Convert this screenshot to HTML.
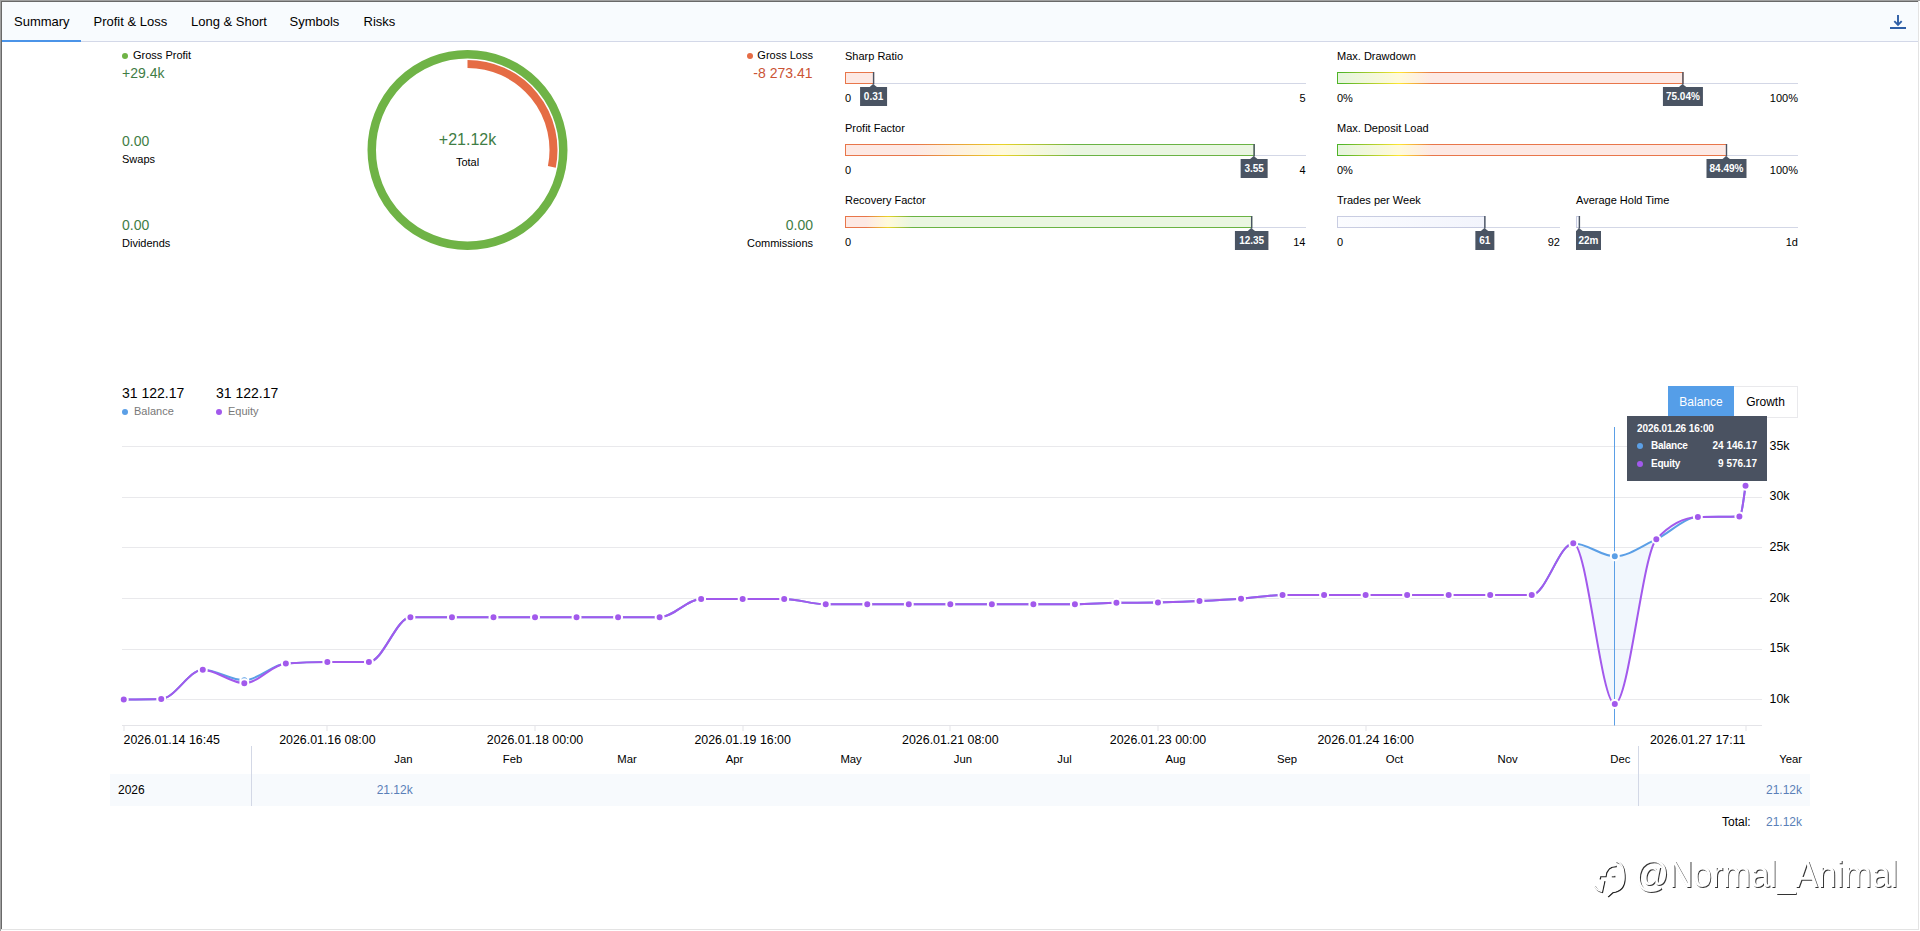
<!DOCTYPE html>
<html lang="en"><head><meta charset="utf-8"><title>Summary</title>
<style>
html,body{margin:0;padding:0;}
body{width:1920px;height:931px;position:relative;overflow:hidden;background:#fff;font-family:"Liberation Sans", sans-serif;}
.t{position:absolute;white-space:nowrap;line-height:20px;height:20px;}
.b{position:absolute;display:block;}
.dot{position:absolute;width:6px;height:6px;border-radius:50%;}
.wm{font-size:37px;line-height:44px;height:44px;color:#fff;text-shadow:1px 1px 0 rgba(0,0,0,.8);transform-origin:0 50%;transform:scaleX(.905);letter-spacing:0;}
</style></head><body>
<div class="b" style="left:0px;top:0px;width:1920px;height:1px;background:#a0a0a0;"></div>
<div class="b" style="left:0px;top:1px;width:1919px;height:1px;background:#696969;"></div>
<div class="b" style="left:0px;top:0px;width:1px;height:931px;background:#a0a0a0;"></div>
<div class="b" style="left:1px;top:1px;width:1px;height:929px;background:#696969;"></div>
<div class="b" style="left:1918px;top:1px;width:1px;height:929px;background:#e3e3e3;"></div>
<div class="b" style="left:1px;top:929px;width:1918px;height:1px;background:#e3e3e3;"></div>
<div class="b" style="left:2px;top:2px;width:1916px;height:39px;background:#f8fbfe;"></div>
<div class="b" style="left:2px;top:41px;width:1916px;height:1px;background:#d3d8e8;"></div>
<div class="b" style="left:2px;top:40px;width:79px;height:2px;background:#4b94e8;"></div>
<div class="t" style="top:11.50px;font-size:13px;color:#000;left:14.00px;">Summary</div>
<div class="t" style="top:11.50px;font-size:13px;color:#000;left:93.50px;">Profit &amp; Loss</div>
<div class="t" style="top:11.50px;font-size:13px;color:#000;left:191.00px;">Long &amp; Short</div>
<div class="t" style="top:11.50px;font-size:13px;color:#000;left:289.50px;">Symbols</div>
<div class="t" style="top:11.50px;font-size:13px;color:#000;left:363.50px;">Risks</div>
<svg class="b" style="left:1886px;top:12px" width="24" height="20" viewBox="0 0 24 20"><path d="M12 3v9.2M8.3 9.2L12 12.9l3.7-3.7" fill="none" stroke="#2e5ea6" stroke-width="1.9"/><rect x="4" y="15" width="16" height="2" fill="#2e5ea6"/></svg>
<div class="dot" style="left:122px;top:53px;background:#6fb346"></div>
<div class="t" style="top:44.50px;font-size:11px;color:#000;left:133.00px;">Gross Profit</div>
<div class="t" style="top:62.50px;font-size:14px;color:#3f7d45;left:122.00px;">+29.4k</div>
<div class="t" style="top:130.50px;font-size:14px;color:#3f7d45;left:122.00px;">0.00</div>
<div class="t" style="top:148.50px;font-size:11px;color:#000;left:122.00px;">Swaps</div>
<div class="t" style="top:214.50px;font-size:14px;color:#3f7d45;left:122.00px;">0.00</div>
<div class="t" style="top:232.50px;font-size:11px;color:#000;left:122.00px;">Dividends</div>
<div class="dot" style="left:747px;top:53px;background:#e56c45"></div>
<div class="t" style="top:44.50px;font-size:11px;color:#000;right:1107.00px;">Gross Loss</div>
<div class="t" style="top:62.50px;font-size:14px;color:#cb5435;right:1107.50px;">-8 273.41</div>
<div class="t" style="top:214.50px;font-size:14px;color:#3f7d45;right:1107.00px;">0.00</div>
<div class="t" style="top:232.50px;font-size:11px;color:#000;right:1107.00px;">Commissions</div>
<svg class="b" style="left:0;top:0" width="1920" height="300" viewBox="0 0 1920 300"><circle cx="467.5" cy="150" r="95.75" fill="none" stroke="#6fb346" stroke-width="8.5"/><path d="M467.5 64A86 86 0 0 1 551.83 166.88" fill="none" stroke="#e56c45" stroke-width="8"/></svg>
<div class="t" style="top:129.50px;font-size:16px;color:#3f7d45;left:317.50px;width:300px;text-align:center;">+21.12k</div>
<div class="t" style="top:151.50px;font-size:11px;color:#000;left:317.50px;width:300px;text-align:center;">Total</div>
<svg class="b" style="left:0;top:0" width="1920" height="300" viewBox="0 0 1920 300"><defs><linearGradient id="g1" gradientUnits="userSpaceOnUse" x1="845" y1="0" x2="1306" y2="0"><stop offset="0.0000" stop-color="#e8764a"/><stop offset="0.1692" stop-color="#e8764a"/><stop offset="0.3427" stop-color="#ead428"/><stop offset="0.4816" stop-color="#6ab344"/><stop offset="1.0000" stop-color="#6ab344"/></linearGradient><linearGradient id="g2" gradientUnits="userSpaceOnUse" x1="845" y1="0" x2="1306" y2="0"><stop offset="0.0000" stop-color="#fde9e4"/><stop offset="0.1692" stop-color="#fde9e4"/><stop offset="0.3427" stop-color="#fffadb"/><stop offset="0.4816" stop-color="#eaf6e1"/><stop offset="1.0000" stop-color="#eaf6e1"/></linearGradient><linearGradient id="g3" gradientUnits="userSpaceOnUse" x1="845" y1="0" x2="1306" y2="0"><stop offset="0.0000" stop-color="#e8764a"/><stop offset="0.1518" stop-color="#e8764a"/><stop offset="0.3427" stop-color="#ead428"/><stop offset="0.4989" stop-color="#6ab344"/><stop offset="1.0000" stop-color="#6ab344"/></linearGradient><linearGradient id="g4" gradientUnits="userSpaceOnUse" x1="845" y1="0" x2="1306" y2="0"><stop offset="0.0000" stop-color="#fde9e4"/><stop offset="0.1518" stop-color="#fde9e4"/><stop offset="0.3427" stop-color="#fffadb"/><stop offset="0.4989" stop-color="#eaf6e1"/><stop offset="1.0000" stop-color="#eaf6e1"/></linearGradient><linearGradient id="g5" gradientUnits="userSpaceOnUse" x1="845" y1="0" x2="1306" y2="0"><stop offset="0.0000" stop-color="#e8764a"/><stop offset="0.0456" stop-color="#e8764a"/><stop offset="0.0933" stop-color="#ead428"/><stop offset="0.1453" stop-color="#6ab344"/><stop offset="1.0000" stop-color="#6ab344"/></linearGradient><linearGradient id="g6" gradientUnits="userSpaceOnUse" x1="845" y1="0" x2="1306" y2="0"><stop offset="0.0000" stop-color="#fde9e4"/><stop offset="0.0456" stop-color="#fde9e4"/><stop offset="0.0933" stop-color="#fffadb"/><stop offset="0.1453" stop-color="#eaf6e1"/><stop offset="1.0000" stop-color="#eaf6e1"/></linearGradient><linearGradient id="g7" gradientUnits="userSpaceOnUse" x1="1337" y1="0" x2="1798" y2="0"><stop offset="0.0000" stop-color="#4fb428"/><stop offset="0.0087" stop-color="#4fb428"/><stop offset="0.1345" stop-color="#ffe631"/><stop offset="0.2061" stop-color="#e8764a"/><stop offset="1.0000" stop-color="#e8764a"/></linearGradient><linearGradient id="g8" gradientUnits="userSpaceOnUse" x1="1337" y1="0" x2="1798" y2="0"><stop offset="0.0000" stop-color="#e6f5dc"/><stop offset="0.0087" stop-color="#e6f5dc"/><stop offset="0.1345" stop-color="#fffadb"/><stop offset="0.2061" stop-color="#fde9e4"/><stop offset="1.0000" stop-color="#fde9e4"/></linearGradient><linearGradient id="g9" gradientUnits="userSpaceOnUse" x1="1337" y1="0" x2="1798" y2="0"><stop offset="0.0000" stop-color="#4fb428"/><stop offset="0.0087" stop-color="#4fb428"/><stop offset="0.1345" stop-color="#ffe631"/><stop offset="0.2061" stop-color="#e8764a"/><stop offset="1.0000" stop-color="#e8764a"/></linearGradient><linearGradient id="g10" gradientUnits="userSpaceOnUse" x1="1337" y1="0" x2="1798" y2="0"><stop offset="0.0000" stop-color="#e6f5dc"/><stop offset="0.0087" stop-color="#e6f5dc"/><stop offset="0.1345" stop-color="#fffadb"/><stop offset="0.2061" stop-color="#fde9e4"/><stop offset="1.0000" stop-color="#fde9e4"/></linearGradient><linearGradient id="g11" gradientUnits="userSpaceOnUse" x1="1337" y1="0" x2="1560" y2="0"><stop offset="0.0000" stop-color="#c9cde2"/><stop offset="1.0000" stop-color="#c3c8de"/></linearGradient><linearGradient id="g12" gradientUnits="userSpaceOnUse" x1="1337" y1="0" x2="1484.858695652174" y2="0"><stop offset="0.0000" stop-color="#fbfcff"/><stop offset="1.0000" stop-color="#f2f4fc"/></linearGradient><linearGradient id="g13" gradientUnits="userSpaceOnUse" x1="1576" y1="0" x2="1798" y2="0"><stop offset="0.0000" stop-color="#c9cde2"/><stop offset="1.0000" stop-color="#c3c8de"/></linearGradient><linearGradient id="g14" gradientUnits="userSpaceOnUse" x1="1576" y1="0" x2="1579.3916666666667" y2="0"><stop offset="0.0000" stop-color="#fbfcff"/><stop offset="1.0000" stop-color="#f2f4fc"/></linearGradient></defs><rect x="845" y="83" width="461" height="1" fill="#d3d7e6"/><rect x="845" y="72" width="29.08" height="12" fill="url(#g1)"/><rect x="846" y="73" width="27.08" height="10" fill="url(#g2)"/><rect x="872.88" y="72" width="1.4" height="12.5" fill="#4a5463"/><rect x="860.08" y="87" width="27" height="19" fill="#4a5463"/><path d="M869.38 87.3L873.08 84L877.28 87.3z" fill="#4a5463"/><rect x="845" y="155" width="461" height="1" fill="#d3d7e6"/><rect x="845" y="144" width="409.64" height="12" fill="url(#g3)"/><rect x="846" y="145" width="407.64" height="10" fill="url(#g4)"/><rect x="1253.44" y="144" width="1.4" height="12.5" fill="#4a5463"/><rect x="1240.64" y="159" width="27" height="19" fill="#4a5463"/><path d="M1249.94 159.3L1253.64 156L1257.84 159.3z" fill="#4a5463"/><rect x="845" y="227" width="461" height="1" fill="#d3d7e6"/><rect x="845" y="216" width="407.17" height="12" fill="url(#g5)"/><rect x="846" y="217" width="405.17" height="10" fill="url(#g6)"/><rect x="1250.97" y="216" width="1.4" height="12.5" fill="#4a5463"/><rect x="1234.92" y="231" width="33.5" height="19" fill="#4a5463"/><path d="M1247.47 231.3L1251.17 228L1255.37 231.3z" fill="#4a5463"/><rect x="1337" y="83" width="461" height="1" fill="#d3d7e6"/><rect x="1337" y="72" width="346.43" height="12" fill="url(#g7)"/><rect x="1338" y="73" width="344.43" height="10" fill="url(#g8)"/><rect x="1682.23" y="72" width="1.4" height="12.5" fill="#4a5463"/><rect x="1662.93" y="87" width="40" height="19" fill="#4a5463"/><path d="M1678.73 87.3L1682.43 84L1686.63 87.3z" fill="#4a5463"/><rect x="1337" y="155" width="461" height="1" fill="#d3d7e6"/><rect x="1337" y="144" width="390.00" height="12" fill="url(#g9)"/><rect x="1338" y="145" width="388.00" height="10" fill="url(#g10)"/><rect x="1725.80" y="144" width="1.4" height="12.5" fill="#4a5463"/><rect x="1706.50" y="159" width="40" height="19" fill="#4a5463"/><path d="M1722.30 159.3L1726.00 156L1730.20 159.3z" fill="#4a5463"/><rect x="1337" y="227" width="223" height="1" fill="#d3d7e6"/><rect x="1337" y="216" width="148.36" height="12" fill="url(#g11)"/><rect x="1338" y="217" width="146.36" height="10" fill="url(#g12)"/><rect x="1484.16" y="216" width="1.4" height="12.5" fill="#4a5463"/><rect x="1475.36" y="231" width="19" height="19" fill="#4a5463"/><path d="M1480.66 231.3L1484.36 228L1488.56 231.3z" fill="#4a5463"/><rect x="1576" y="227" width="222" height="1" fill="#d3d7e6"/><rect x="1576" y="216" width="3.89" height="12" fill="url(#g13)"/><rect x="1577" y="217" width="1.89" height="10" fill="url(#g14)"/><rect x="1578.69" y="216" width="1.4" height="12.5" fill="#4a5463"/><rect x="1576.00" y="231" width="25" height="19" fill="#4a5463"/><path d="M1576.00 231.3L1578.89 228L1583.09 231.3z" fill="#4a5463"/></svg>
<div class="t" style="top:45.50px;font-size:11px;color:#000;left:845.00px;">Sharp Ratio</div>
<div class="t" style="top:87.10px;font-size:10px;color:#fff;font-weight:bold;left:723.58px;width:300px;text-align:center;">0.31</div>
<div class="t" style="top:88.00px;font-size:11px;color:#000;left:845.00px;">0</div>
<div class="t" style="top:88.00px;font-size:11px;color:#000;right:614.30px;">5</div>
<div class="t" style="top:117.50px;font-size:11px;color:#000;left:845.00px;">Profit Factor</div>
<div class="t" style="top:159.10px;font-size:10px;color:#fff;font-weight:bold;left:1104.14px;width:300px;text-align:center;">3.55</div>
<div class="t" style="top:160.00px;font-size:11px;color:#000;left:845.00px;">0</div>
<div class="t" style="top:160.00px;font-size:11px;color:#000;right:614.50px;">4</div>
<div class="t" style="top:189.50px;font-size:11px;color:#000;left:845.00px;">Recovery Factor</div>
<div class="t" style="top:231.10px;font-size:10px;color:#fff;font-weight:bold;left:1101.67px;width:300px;text-align:center;">12.35</div>
<div class="t" style="top:232.00px;font-size:11px;color:#000;left:845.00px;">0</div>
<div class="t" style="top:232.00px;font-size:11px;color:#000;right:614.50px;">14</div>
<div class="t" style="top:45.50px;font-size:11px;color:#000;left:1337.00px;">Max. Drawdown</div>
<div class="t" style="top:87.10px;font-size:10px;color:#fff;font-weight:bold;left:1532.93px;width:300px;text-align:center;">75.04%</div>
<div class="t" style="top:88.00px;font-size:11px;color:#000;left:1337.00px;">0%</div>
<div class="t" style="top:88.00px;font-size:11px;color:#000;right:122.00px;">100%</div>
<div class="t" style="top:117.50px;font-size:11px;color:#000;left:1337.00px;">Max. Deposit Load</div>
<div class="t" style="top:159.10px;font-size:10px;color:#fff;font-weight:bold;left:1576.50px;width:300px;text-align:center;">84.49%</div>
<div class="t" style="top:160.00px;font-size:11px;color:#000;left:1337.00px;">0%</div>
<div class="t" style="top:160.00px;font-size:11px;color:#000;right:122.00px;">100%</div>
<div class="t" style="top:189.50px;font-size:11px;color:#000;left:1337.00px;">Trades per Week</div>
<div class="t" style="top:231.10px;font-size:10px;color:#fff;font-weight:bold;left:1334.86px;width:300px;text-align:center;">61</div>
<div class="t" style="top:232.00px;font-size:11px;color:#000;left:1337.00px;">0</div>
<div class="t" style="top:232.00px;font-size:11px;color:#000;right:360.00px;">92</div>
<div class="t" style="top:189.50px;font-size:11px;color:#000;left:1576.00px;">Average Hold Time</div>
<div class="t" style="top:231.10px;font-size:10px;color:#fff;font-weight:bold;left:1438.50px;width:300px;text-align:center;">22m</div>
<div class="t" style="top:232.00px;font-size:11px;color:#000;right:122.00px;">1d</div>
<div class="t" style="top:382.50px;font-size:14px;color:#000;left:122.00px;">31 122.17</div>
<div class="dot" style="left:122px;top:409px;background:#5b9fe6"></div>
<div class="t" style="top:400.50px;font-size:11px;color:#787878;left:134.00px;">Balance</div>
<div class="t" style="top:382.50px;font-size:14px;color:#000;left:216.00px;">31 122.17</div>
<div class="dot" style="left:216px;top:409px;background:#a259ec"></div>
<div class="t" style="top:400.50px;font-size:11px;color:#787878;left:228.00px;">Equity</div>
<div class="b" style="left:1668px;top:386px;width:130px;height:32px;background:#fff;box-sizing:border-box;border:1px solid #e9e9ec;"></div>
<div class="b" style="left:1668px;top:386px;width:66px;height:32px;background:#559ee8;"></div>
<div class="t" style="top:391.50px;font-size:12px;color:#fff;left:1551.00px;width:300px;text-align:center;">Balance</div>
<div class="t" style="top:391.50px;font-size:12px;color:#000;left:1615.50px;width:300px;text-align:center;">Growth</div>
<svg class="b" style="left:0;top:420px" width="1920" height="320" viewBox="0 420 1920 320"><rect x="122" y="446" width="1640" height="1" fill="#e9e9ec"/><rect x="122" y="497" width="1640" height="1" fill="#e9e9ec"/><rect x="122" y="547" width="1640" height="1" fill="#e9e9ec"/><rect x="122" y="598" width="1640" height="1" fill="#e9e9ec"/><rect x="122" y="649" width="1640" height="1" fill="#e9e9ec"/><rect x="122" y="699" width="1640" height="1" fill="#e9e9ec"/><rect x="122" y="725" width="1640" height="1" fill="#e4e4e8"/><rect x="123.5" y="726" width="1" height="5" fill="#e4e4e8"/><rect x="326.5" y="726" width="1" height="5" fill="#e4e4e8"/><rect x="534.5" y="726" width="1" height="5" fill="#e4e4e8"/><rect x="742.5" y="726" width="1" height="5" fill="#e4e4e8"/><rect x="949.5" y="726" width="1" height="5" fill="#e4e4e8"/><rect x="1157.5" y="726" width="1" height="5" fill="#e4e4e8"/><rect x="1365.5" y="726" width="1" height="5" fill="#e4e4e8"/><rect x="1745.5" y="726" width="1" height="5" fill="#e4e4e8"/><path d="M123.75 699.60C136.25 699.50 148.75 699.40 161.25 699.00C175.09 698.56 188.94 669.75 202.78 669.75C216.62 669.75 230.47 680.25 244.31 680.25C258.15 680.25 272.00 664.50 285.84 663.50C299.68 662.50 313.53 662.00 327.37 662.00C341.21 662.00 355.06 662.00 368.90 662.00C382.74 662.00 396.59 617.25 410.43 617.25C424.27 617.25 438.12 617.25 451.96 617.25C465.80 617.25 479.65 617.25 493.49 617.25C507.33 617.25 521.18 617.25 535.02 617.25C548.86 617.25 562.71 617.25 576.55 617.25C590.39 617.25 604.24 617.25 618.08 617.25C631.92 617.25 645.77 617.25 659.61 617.25C673.45 617.25 687.30 599.00 701.14 599.00C714.98 599.00 728.83 599.00 742.67 599.00C756.51 599.00 770.36 599.00 784.20 599.00C798.04 599.00 811.89 604.25 825.73 604.25C839.57 604.25 853.42 604.25 867.26 604.25C881.10 604.25 894.95 604.25 908.79 604.25C922.63 604.25 936.48 604.25 950.32 604.25C964.16 604.25 978.01 604.25 991.85 604.25C1005.69 604.25 1019.54 604.25 1033.38 604.25C1047.22 604.25 1061.07 604.25 1074.91 604.25C1088.75 604.25 1102.60 602.92 1116.44 602.75C1130.28 602.58 1144.13 602.67 1157.97 602.50C1171.81 602.33 1185.66 601.62 1199.50 601.00C1213.34 600.38 1227.19 599.75 1241.03 598.75C1254.87 597.75 1268.72 595.00 1282.56 595.00C1296.40 595.00 1310.25 595.00 1324.09 595.00C1337.93 595.00 1351.78 595.00 1365.62 595.00C1379.46 595.00 1393.31 595.00 1407.15 595.00C1420.99 595.00 1434.84 595.00 1448.68 595.00C1462.52 595.00 1476.37 595.00 1490.21 595.00C1504.05 595.00 1517.90 595.00 1531.74 595.00C1545.58 595.00 1559.43 543.20 1573.27 543.20C1587.11 543.20 1600.96 556.30 1614.80 556.30C1628.64 556.30 1642.49 545.75 1656.33 539.20C1670.17 532.65 1684.02 517.40 1697.86 517.00C1711.70 516.60 1725.55 516.80 1739.39 516.40C1741.44 516.34 1743.49 501.02 1745.53 485.70L1745.53 485.70C1743.49 501.02 1741.44 516.34 1739.39 516.40C1725.55 516.80 1711.70 516.60 1697.86 517.00C1684.02 517.40 1670.17 524.40 1656.33 539.20C1642.49 554.00 1628.64 704.00 1614.80 704.00C1600.96 704.00 1587.11 543.20 1573.27 543.20C1559.43 543.20 1545.58 595.00 1531.74 595.00C1517.90 595.00 1504.05 595.00 1490.21 595.00C1476.37 595.00 1462.52 595.00 1448.68 595.00C1434.84 595.00 1420.99 595.00 1407.15 595.00C1393.31 595.00 1379.46 595.00 1365.62 595.00C1351.78 595.00 1337.93 595.00 1324.09 595.00C1310.25 595.00 1296.40 595.00 1282.56 595.00C1268.72 595.00 1254.87 597.75 1241.03 598.75C1227.19 599.75 1213.34 600.38 1199.50 601.00C1185.66 601.62 1171.81 602.33 1157.97 602.50C1144.13 602.67 1130.28 602.58 1116.44 602.75C1102.60 602.92 1088.75 604.25 1074.91 604.25C1061.07 604.25 1047.22 604.25 1033.38 604.25C1019.54 604.25 1005.69 604.25 991.85 604.25C978.01 604.25 964.16 604.25 950.32 604.25C936.48 604.25 922.63 604.25 908.79 604.25C894.95 604.25 881.10 604.25 867.26 604.25C853.42 604.25 839.57 604.25 825.73 604.25C811.89 604.25 798.04 599.00 784.20 599.00C770.36 599.00 756.51 599.00 742.67 599.00C728.83 599.00 714.98 599.00 701.14 599.00C687.30 599.00 673.45 617.25 659.61 617.25C645.77 617.25 631.92 617.25 618.08 617.25C604.24 617.25 590.39 617.25 576.55 617.25C562.71 617.25 548.86 617.25 535.02 617.25C521.18 617.25 507.33 617.25 493.49 617.25C479.65 617.25 465.80 617.25 451.96 617.25C438.12 617.25 424.27 617.25 410.43 617.25C396.59 617.25 382.74 662.00 368.90 662.00C355.06 662.00 341.21 662.00 327.37 662.00C313.53 662.00 299.68 662.50 285.84 663.50C272.00 664.50 258.15 683.25 244.31 683.25C230.47 683.25 216.62 669.75 202.78 669.75C188.94 669.75 175.09 698.56 161.25 699.00C148.75 699.40 136.25 699.50 123.75 699.60z" fill="#5b9fe6" fill-opacity="0.085"/><rect x="1614" y="427" width="1" height="298.5" fill="#5b9fe6"/><path d="M123.75 699.60C136.25 699.50 148.75 699.40 161.25 699.00C175.09 698.56 188.94 669.75 202.78 669.75C216.62 669.75 230.47 680.25 244.31 680.25C258.15 680.25 272.00 664.50 285.84 663.50C299.68 662.50 313.53 662.00 327.37 662.00C341.21 662.00 355.06 662.00 368.90 662.00C382.74 662.00 396.59 617.25 410.43 617.25C424.27 617.25 438.12 617.25 451.96 617.25C465.80 617.25 479.65 617.25 493.49 617.25C507.33 617.25 521.18 617.25 535.02 617.25C548.86 617.25 562.71 617.25 576.55 617.25C590.39 617.25 604.24 617.25 618.08 617.25C631.92 617.25 645.77 617.25 659.61 617.25C673.45 617.25 687.30 599.00 701.14 599.00C714.98 599.00 728.83 599.00 742.67 599.00C756.51 599.00 770.36 599.00 784.20 599.00C798.04 599.00 811.89 604.25 825.73 604.25C839.57 604.25 853.42 604.25 867.26 604.25C881.10 604.25 894.95 604.25 908.79 604.25C922.63 604.25 936.48 604.25 950.32 604.25C964.16 604.25 978.01 604.25 991.85 604.25C1005.69 604.25 1019.54 604.25 1033.38 604.25C1047.22 604.25 1061.07 604.25 1074.91 604.25C1088.75 604.25 1102.60 602.92 1116.44 602.75C1130.28 602.58 1144.13 602.67 1157.97 602.50C1171.81 602.33 1185.66 601.62 1199.50 601.00C1213.34 600.38 1227.19 599.75 1241.03 598.75C1254.87 597.75 1268.72 595.00 1282.56 595.00C1296.40 595.00 1310.25 595.00 1324.09 595.00C1337.93 595.00 1351.78 595.00 1365.62 595.00C1379.46 595.00 1393.31 595.00 1407.15 595.00C1420.99 595.00 1434.84 595.00 1448.68 595.00C1462.52 595.00 1476.37 595.00 1490.21 595.00C1504.05 595.00 1517.90 595.00 1531.74 595.00C1545.58 595.00 1559.43 543.20 1573.27 543.20C1587.11 543.20 1600.96 556.30 1614.80 556.30C1628.64 556.30 1642.49 545.75 1656.33 539.20C1670.17 532.65 1684.02 517.40 1697.86 517.00C1711.70 516.60 1725.55 516.80 1739.39 516.40C1741.44 516.34 1743.49 501.02 1745.53 485.70" fill="none" stroke="#5b9fe6" stroke-width="2" stroke-linejoin="round"/><circle cx="244.31" cy="680.25" r="4" fill="#5b9fe6" stroke="#fff" stroke-width="2"/><circle cx="1614.80" cy="556.30" r="4" fill="#5b9fe6" stroke="#fff" stroke-width="2"/><path d="M123.75 699.60C136.25 699.50 148.75 699.40 161.25 699.00C175.09 698.56 188.94 669.75 202.78 669.75C216.62 669.75 230.47 683.25 244.31 683.25C258.15 683.25 272.00 664.50 285.84 663.50C299.68 662.50 313.53 662.00 327.37 662.00C341.21 662.00 355.06 662.00 368.90 662.00C382.74 662.00 396.59 617.25 410.43 617.25C424.27 617.25 438.12 617.25 451.96 617.25C465.80 617.25 479.65 617.25 493.49 617.25C507.33 617.25 521.18 617.25 535.02 617.25C548.86 617.25 562.71 617.25 576.55 617.25C590.39 617.25 604.24 617.25 618.08 617.25C631.92 617.25 645.77 617.25 659.61 617.25C673.45 617.25 687.30 599.00 701.14 599.00C714.98 599.00 728.83 599.00 742.67 599.00C756.51 599.00 770.36 599.00 784.20 599.00C798.04 599.00 811.89 604.25 825.73 604.25C839.57 604.25 853.42 604.25 867.26 604.25C881.10 604.25 894.95 604.25 908.79 604.25C922.63 604.25 936.48 604.25 950.32 604.25C964.16 604.25 978.01 604.25 991.85 604.25C1005.69 604.25 1019.54 604.25 1033.38 604.25C1047.22 604.25 1061.07 604.25 1074.91 604.25C1088.75 604.25 1102.60 602.92 1116.44 602.75C1130.28 602.58 1144.13 602.67 1157.97 602.50C1171.81 602.33 1185.66 601.62 1199.50 601.00C1213.34 600.38 1227.19 599.75 1241.03 598.75C1254.87 597.75 1268.72 595.00 1282.56 595.00C1296.40 595.00 1310.25 595.00 1324.09 595.00C1337.93 595.00 1351.78 595.00 1365.62 595.00C1379.46 595.00 1393.31 595.00 1407.15 595.00C1420.99 595.00 1434.84 595.00 1448.68 595.00C1462.52 595.00 1476.37 595.00 1490.21 595.00C1504.05 595.00 1517.90 595.00 1531.74 595.00C1545.58 595.00 1559.43 543.20 1573.27 543.20C1587.11 543.20 1600.96 704.00 1614.80 704.00C1628.64 704.00 1642.49 554.00 1656.33 539.20C1670.17 524.40 1684.02 517.40 1697.86 517.00C1711.70 516.60 1725.55 516.80 1739.39 516.40C1741.44 516.34 1743.49 501.02 1745.53 485.70" fill="none" stroke="#a259ec" stroke-width="2" stroke-linejoin="round"/><circle cx="123.75" cy="699.60" r="4" fill="#a259ec" stroke="#fff" stroke-width="2"/><circle cx="161.25" cy="699.00" r="4" fill="#a259ec" stroke="#fff" stroke-width="2"/><circle cx="202.78" cy="669.75" r="4" fill="#a259ec" stroke="#fff" stroke-width="2"/><circle cx="244.31" cy="683.25" r="4" fill="#a259ec" stroke="#fff" stroke-width="2"/><circle cx="285.84" cy="663.50" r="4" fill="#a259ec" stroke="#fff" stroke-width="2"/><circle cx="327.37" cy="662.00" r="4" fill="#a259ec" stroke="#fff" stroke-width="2"/><circle cx="368.90" cy="662.00" r="4" fill="#a259ec" stroke="#fff" stroke-width="2"/><circle cx="410.43" cy="617.25" r="4" fill="#a259ec" stroke="#fff" stroke-width="2"/><circle cx="451.96" cy="617.25" r="4" fill="#a259ec" stroke="#fff" stroke-width="2"/><circle cx="493.49" cy="617.25" r="4" fill="#a259ec" stroke="#fff" stroke-width="2"/><circle cx="535.02" cy="617.25" r="4" fill="#a259ec" stroke="#fff" stroke-width="2"/><circle cx="576.55" cy="617.25" r="4" fill="#a259ec" stroke="#fff" stroke-width="2"/><circle cx="618.08" cy="617.25" r="4" fill="#a259ec" stroke="#fff" stroke-width="2"/><circle cx="659.61" cy="617.25" r="4" fill="#a259ec" stroke="#fff" stroke-width="2"/><circle cx="701.14" cy="599.00" r="4" fill="#a259ec" stroke="#fff" stroke-width="2"/><circle cx="742.67" cy="599.00" r="4" fill="#a259ec" stroke="#fff" stroke-width="2"/><circle cx="784.20" cy="599.00" r="4" fill="#a259ec" stroke="#fff" stroke-width="2"/><circle cx="825.73" cy="604.25" r="4" fill="#a259ec" stroke="#fff" stroke-width="2"/><circle cx="867.26" cy="604.25" r="4" fill="#a259ec" stroke="#fff" stroke-width="2"/><circle cx="908.79" cy="604.25" r="4" fill="#a259ec" stroke="#fff" stroke-width="2"/><circle cx="950.32" cy="604.25" r="4" fill="#a259ec" stroke="#fff" stroke-width="2"/><circle cx="991.85" cy="604.25" r="4" fill="#a259ec" stroke="#fff" stroke-width="2"/><circle cx="1033.38" cy="604.25" r="4" fill="#a259ec" stroke="#fff" stroke-width="2"/><circle cx="1074.91" cy="604.25" r="4" fill="#a259ec" stroke="#fff" stroke-width="2"/><circle cx="1116.44" cy="602.75" r="4" fill="#a259ec" stroke="#fff" stroke-width="2"/><circle cx="1157.97" cy="602.50" r="4" fill="#a259ec" stroke="#fff" stroke-width="2"/><circle cx="1199.50" cy="601.00" r="4" fill="#a259ec" stroke="#fff" stroke-width="2"/><circle cx="1241.03" cy="598.75" r="4" fill="#a259ec" stroke="#fff" stroke-width="2"/><circle cx="1282.56" cy="595.00" r="4" fill="#a259ec" stroke="#fff" stroke-width="2"/><circle cx="1324.09" cy="595.00" r="4" fill="#a259ec" stroke="#fff" stroke-width="2"/><circle cx="1365.62" cy="595.00" r="4" fill="#a259ec" stroke="#fff" stroke-width="2"/><circle cx="1407.15" cy="595.00" r="4" fill="#a259ec" stroke="#fff" stroke-width="2"/><circle cx="1448.68" cy="595.00" r="4" fill="#a259ec" stroke="#fff" stroke-width="2"/><circle cx="1490.21" cy="595.00" r="4" fill="#a259ec" stroke="#fff" stroke-width="2"/><circle cx="1531.74" cy="595.00" r="4" fill="#a259ec" stroke="#fff" stroke-width="2"/><circle cx="1573.27" cy="543.20" r="4" fill="#a259ec" stroke="#fff" stroke-width="2"/><circle cx="1614.80" cy="704.00" r="4" fill="#a259ec" stroke="#fff" stroke-width="2"/><circle cx="1656.33" cy="539.20" r="4" fill="#a259ec" stroke="#fff" stroke-width="2"/><circle cx="1697.86" cy="517.00" r="4" fill="#a259ec" stroke="#fff" stroke-width="2"/><circle cx="1739.39" cy="516.40" r="4" fill="#a259ec" stroke="#fff" stroke-width="2"/><circle cx="1745.53" cy="485.70" r="4" fill="#a259ec" stroke="#fff" stroke-width="2"/></svg>
<div class="t" style="top:435.50px;font-size:12.4px;color:#000;left:1769.50px;">35k</div>
<div class="t" style="top:485.50px;font-size:12.4px;color:#000;left:1769.50px;">30k</div>
<div class="t" style="top:536.50px;font-size:12.4px;color:#000;left:1769.50px;">25k</div>
<div class="t" style="top:587.50px;font-size:12.4px;color:#000;left:1769.50px;">20k</div>
<div class="t" style="top:637.50px;font-size:12.4px;color:#000;left:1769.50px;">15k</div>
<div class="t" style="top:688.50px;font-size:12.4px;color:#000;left:1769.50px;">10k</div>
<div class="t" style="top:730.00px;font-size:12.4px;color:#000;left:123.50px;">2026.01.14 16:45</div>
<div class="t" style="top:730.00px;font-size:12.4px;color:#000;left:177.37px;width:300px;text-align:center;">2026.01.16 08:00</div>
<div class="t" style="top:730.00px;font-size:12.4px;color:#000;left:385.02px;width:300px;text-align:center;">2026.01.18 00:00</div>
<div class="t" style="top:730.00px;font-size:12.4px;color:#000;left:592.67px;width:300px;text-align:center;">2026.01.19 16:00</div>
<div class="t" style="top:730.00px;font-size:12.4px;color:#000;left:800.32px;width:300px;text-align:center;">2026.01.21 08:00</div>
<div class="t" style="top:730.00px;font-size:12.4px;color:#000;left:1007.97px;width:300px;text-align:center;">2026.01.23 00:00</div>
<div class="t" style="top:730.00px;font-size:12.4px;color:#000;left:1215.62px;width:300px;text-align:center;">2026.01.24 16:00</div>
<div class="t" style="top:730.00px;font-size:12.4px;color:#000;right:174.50px;">2026.01.27 17:11</div>
<div class="b" style="left:1627px;top:416px;width:140px;height:65px;background:#4a5261;"></div>
<div class="t" style="top:418.50px;font-size:10px;color:#fff;font-weight:bold;left:1637.00px;letter-spacing:-.1px;">2026.01.26 16:00</div>
<div class="dot" style="left:1637px;top:443px;background:#5b9fe6"></div>
<div class="t" style="top:436.00px;font-size:10px;color:#fff;font-weight:bold;left:1651.00px;letter-spacing:-.25px;">Balance</div>
<div class="t" style="top:436.00px;font-size:10px;color:#fff;font-weight:bold;right:163.00px;">24 146.17</div>
<div class="dot" style="left:1637px;top:461px;background:#a259ec"></div>
<div class="t" style="top:454.00px;font-size:10px;color:#fff;font-weight:bold;left:1651.00px;letter-spacing:-.25px;">Equity</div>
<div class="t" style="top:454.00px;font-size:10px;color:#fff;font-weight:bold;right:163.00px;">9 576.17</div>
<div class="b" style="left:110px;top:774px;width:1700px;height:32px;background:#f7fafd;"></div>
<div class="b" style="left:251px;top:746px;width:1px;height:60px;background:#d3d8e6;"></div>
<div class="b" style="left:1638px;top:746px;width:1px;height:60px;background:#d3d8e6;"></div>
<div class="t" style="top:748.50px;font-size:11.3px;color:#000;right:1507.50px;">Jan</div>
<div class="t" style="top:748.50px;font-size:11.3px;color:#000;right:1397.70px;">Feb</div>
<div class="t" style="top:748.50px;font-size:11.3px;color:#000;right:1283.30px;">Mar</div>
<div class="t" style="top:748.50px;font-size:11.3px;color:#000;right:1176.75px;">Apr</div>
<div class="t" style="top:748.50px;font-size:11.3px;color:#000;right:1058.25px;">May</div>
<div class="t" style="top:748.50px;font-size:11.3px;color:#000;right:948.00px;">Jun</div>
<div class="t" style="top:748.50px;font-size:11.3px;color:#000;right:848.25px;">Jul</div>
<div class="t" style="top:748.50px;font-size:11.3px;color:#000;right:734.50px;">Aug</div>
<div class="t" style="top:748.50px;font-size:11.3px;color:#000;right:623.00px;">Sep</div>
<div class="t" style="top:748.50px;font-size:11.3px;color:#000;right:516.75px;">Oct</div>
<div class="t" style="top:748.50px;font-size:11.3px;color:#000;right:402.30px;">Nov</div>
<div class="t" style="top:748.50px;font-size:11.3px;color:#000;right:289.70px;">Dec</div>
<div class="t" style="top:748.50px;font-size:11.3px;color:#000;right:118.00px;">Year</div>
<div class="t" style="top:780.00px;font-size:12px;color:#000;left:118.00px;">2026</div>
<div class="t" style="top:780.00px;font-size:12px;color:#5a7fb8;right:1507.30px;">21.12k</div>
<div class="t" style="top:780.00px;font-size:12px;color:#5a7fb8;right:118.00px;">21.12k</div>
<div class="t" style="top:812.00px;font-size:12px;color:#000;right:169.30px;">Total:</div>
<div class="t" style="top:812.00px;font-size:12px;color:#5a7fb8;right:118.00px;">21.12k</div>
<svg class="b" style="left:1590px;top:855px;filter:drop-shadow(1px 1px 0 rgba(0,0,0,.85))" width="40" height="46" viewBox="0 0 40 46"><g fill="none" stroke="#fff" stroke-width="1.5"><path d="M4 30.4C5.6 33.6 8.2 35.6 11.4 36.3L13.8 25.2"/><path d="M9.2 23.4L9.6 20.6H14.9C15.6 14.5 18.4 10.4 25.8 10.5"/><path d="M20.8 20.6h3.6"/><path d="M25.5 6.2C31.5 7 34 13.5 34 22.2C34 30.2 30 35.6 21.9 36.6L17.2 41"/></g></svg>
<div class="t wm" style="left:1634.5px;top:853px;">@Normal_Animal</div>
</body></html>
